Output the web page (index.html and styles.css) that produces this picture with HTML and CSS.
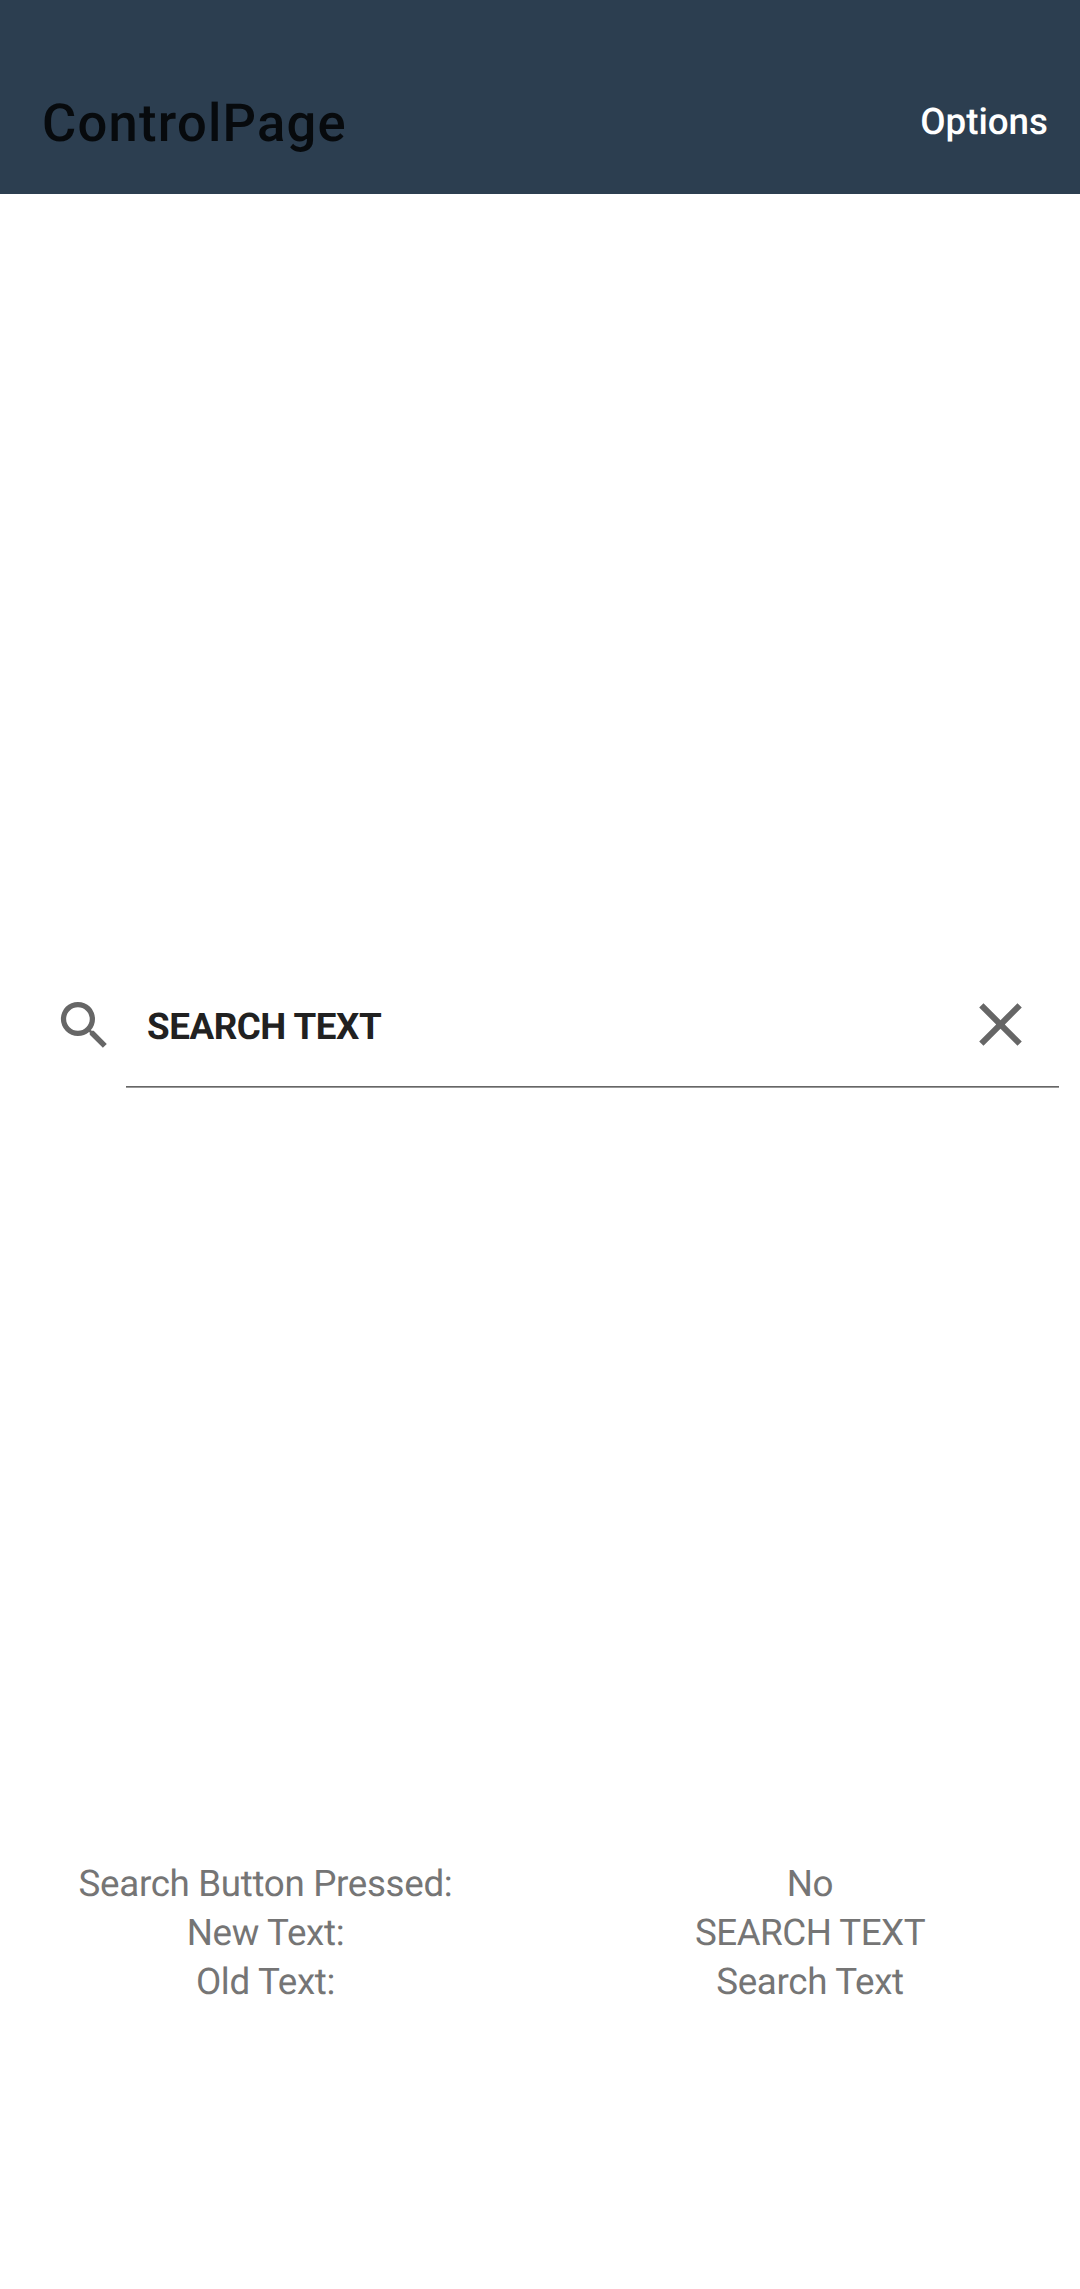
FILE: index.html
```html
<!DOCTYPE html>
<html lang="en">
<head>
<meta charset="utf-8">
<title>ControlPage</title>
<link rel="stylesheet" href="styles.css">
</head>
<body>
<header class="toolbar">
  <h1 class="title">ControlPage</h1>
  <span class="options">Options</span>
</header>
<main class="content">
  <section class="search-area">
    <div class="search">
      <svg class="icon-search" viewBox="0 0 24 24"><path d="M15.5 14h-.79l-.28-.27A6.47 6.47 0 0 0 16 9.5 6.5 6.5 0 1 0 9.5 16c1.61 0 3.09-.59 4.23-1.57l.27.28v.79l5 4.99L20.49 19l-4.99-5zm-6 0C7.01 14 5 11.99 5 9.5S7.01 5 9.5 5 14 7.01 14 9.5 11.99 14 9.5 14z"/></svg>
      <div class="field">
        <span class="query">SEARCH TEXT</span>
        <svg class="icon-close" viewBox="0 0 24 24"><path d="M19 6.41L17.59 5 12 10.59 6.41 5 5 6.41 10.59 12 5 17.59 6.41 19 12 13.41 17.59 19 19 17.59 13.41 12z"/></svg>
      </div>
    </div>
  </section>
  <section class="status">
    <span>Search Button Pressed:</span><span>No</span>
    <span>New Text:</span><span class="new-text">SEARCH TEXT</span>
    <span>Old Text:</span><span>Search Text</span>
  </section>
</main>
</body>
</html>
```
FILE: styles.css
```css
body { margin: 0; height: 2289px; background: #fff; font-family: Roboto, sans-serif; text-rendering: geometricPrecision; display: flex; flex-direction: column; }
.toolbar { box-sizing: border-box; height: 194px; padding: 48px 32px 0 42px; background: #2c3e50; display: flex; align-items: center; justify-content: space-between; }
.title { margin: 0; padding-top: 3px; font-size: 52.5px; font-weight: 500; line-height: 62px; letter-spacing: 1.25px; color: #070a0d; }
.options { font-size: 36.75px; font-weight: 500; color: #fff; }
.content { flex: 1; display: flex; flex-direction: column; }
.search-area { height: 1665px; }
.search { display: flex; padding: 767px 21px 0 53px; }
.icon-search { width: 63px; height: 63px; margin-top: 33px; fill: #666; }
.field { flex: 1; box-sizing: border-box; height: 127px; margin-left: 10px; padding: 1px 22px 0 21px; border-bottom: 1px solid #999; box-shadow: inset 0 -1px #666; display: flex; align-items: center; justify-content: space-between; }
.query { padding-top: 4px; font-size: 36.75px; font-weight: 700; letter-spacing: -0.45px; color: #212121; }
.icon-close { width: 73px; height: 73px; fill: #666; }
.status { display: grid; grid-template-columns: 531px 558px; text-align: center; font-size: 36.75px; line-height: 49px; letter-spacing: -0.33px; color: #757575; }
.new-text { letter-spacing: -0.5px; }
```
